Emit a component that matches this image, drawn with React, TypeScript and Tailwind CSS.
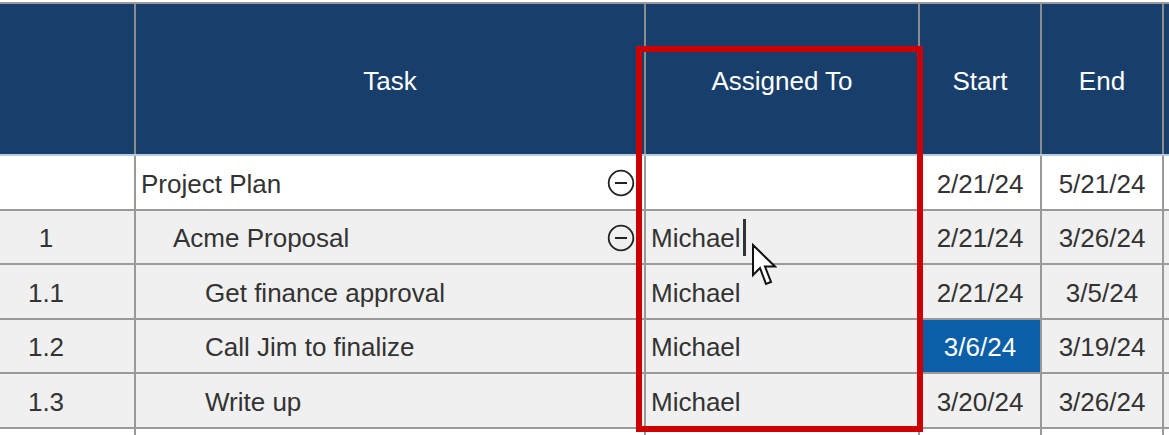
import React from "react";

type Row = {
  num: string;
  task: string;
  level: number;
  collapsible?: boolean;
  who: string;
  start: string;
  end: string;
  h: string;
};

const rows: Row[] = [
  { num: "", task: "Project Plan", level: 0, collapsible: true, who: "", start: "2/21/24", end: "5/21/24", h: "h-[55px]" },
  { num: "1", task: "Acme Proposal", level: 1, collapsible: true, who: "Michael", start: "2/21/24", end: "3/26/24", h: "h-[54px]" },
  { num: "1.1", task: "Get finance approval", level: 2, who: "Michael", start: "2/21/24", end: "3/5/24", h: "h-[55px]" },
  { num: "1.2", task: "Call Jim to finalize", level: 2, who: "Michael", start: "3/6/24", end: "3/19/24", h: "h-[54px]" },
  { num: "1.3", task: "Write up", level: 2, who: "Michael", start: "3/20/24", end: "3/26/24", h: "h-[55px]" },
];

const indent = ["pl-[5px]", "pl-[37px]", "pl-[69px]"];

function CollapseIcon() {
  return (
    <svg width="28" height="28" viewBox="0 0 28 28" className="shrink-0 mb-[2px]">
      <circle cx="14" cy="14" r="12.3" fill="none" stroke="#222" strokeWidth="1.8" />
      <line x1="8" y1="14" x2="20" y2="14" stroke="#222" strokeWidth="2" />
    </svg>
  );
}

function Pointer() {
  return (
    <svg width="26" height="46" viewBox="0 0 26 46" className="absolute left-[751px] top-[243px]">
      <path
        d="M2 2 L2 32 L9 25 L15 41 L20 39 L14 23.5 L24 23.5 Z"
        fill="#fff"
        stroke="#111"
        strokeWidth="2"
        strokeLinejoin="miter"
      />
    </svg>
  );
}

export default function App() {
  return (
    <div
      className="relative w-[1169px] h-[435px] overflow-hidden bg-white text-[#333]"
      style={{ fontFamily: '"Liberation Sans", Arial, sans-serif' }}
    >
      <div className="pt-[2px]">
        {/* header */}
        <div className="flex h-[154px] border-t-2 border-b-2 border-t-[#9a9a9a] border-b-[#b3cde6] bg-[#183e6b] text-white text-[26px]">
          <div className="w-[136px] shrink-0 border-r-2 border-[#8c8c8c]" />
          <div className="w-[510px] shrink-0 border-r-2 border-[#8c8c8c] flex items-center justify-center pt-[4px]">
            Task
          </div>
          <div className="w-[274px] shrink-0 border-r-2 border-[#8c8c8c] flex items-center justify-center pt-[4px]">
            Assigned To
          </div>
          <div className="w-[122px] shrink-0 border-r-2 border-[#8c8c8c] flex items-center justify-center pt-[4px]">
            Start
          </div>
          <div className="w-[122px] shrink-0 border-r-2 border-[#8c8c8c] flex items-center justify-center pt-[4px]">
            End
          </div>
          <div className="flex-1" />
        </div>

        {/* body */}
        {rows.map((r, i) => (
          <div
            key={i}
            className={`flex ${r.h} border-b-2 border-[#9a9a9a] text-[26px] ${i === 0 ? "bg-white" : "bg-[#f0f0f0]"}`}
          >
            <div className="w-[136px] shrink-0 border-r-2 border-[#9a9a9a] flex items-center justify-center pr-[42px] pt-[3px]">
              {r.num}
            </div>
            <div className={`w-[510px] shrink-0 border-r-2 border-[#9a9a9a] flex items-center justify-between pr-[9px] pt-[3px] ${indent[r.level]}`}>
              <span>{r.task}</span>
              {r.collapsible && <CollapseIcon />}
            </div>
            <div className="w-[274px] shrink-0 border-r-2 border-[#9a9a9a] flex items-center pl-[5px] pt-[3px]">
              <span>{r.who}</span>
              {i === 1 && <span className="inline-block w-[3px] h-[37px] bg-[#333] ml-[2px] mb-[3px]" />}
            </div>
            <div
              className={`w-[122px] shrink-0 border-r-2 border-[#9a9a9a] flex items-center justify-center pt-[3px] ${
                r.start === "3/6/24" ? "bg-[#0b5ea8] text-white" : ""
              }`}
            >
              {r.start}
            </div>
            <div className="w-[122px] shrink-0 border-r-2 border-[#9a9a9a] flex items-center justify-center pt-[3px]">
              {r.end}
            </div>
            <div className="flex-1" />
          </div>
        ))}
        <div className="flex h-[20px] bg-white">
          <div className="w-[136px] shrink-0 border-r-2 border-[#9a9a9a]" />
          <div className="w-[510px] shrink-0 border-r-2 border-[#9a9a9a]" />
          <div className="w-[274px] shrink-0 border-r-2 border-[#9a9a9a]" />
          <div className="w-[122px] shrink-0 border-r-2 border-[#9a9a9a]" />
          <div className="w-[122px] shrink-0 border-r-2 border-[#9a9a9a]" />
        </div>
      </div>

      {/* highlight box */}
      <div className="absolute left-[636px] top-[46px] w-[287px] h-[386px] border-[6px] border-[#cc0000]" />

      <Pointer />
    </div>
  );
}
